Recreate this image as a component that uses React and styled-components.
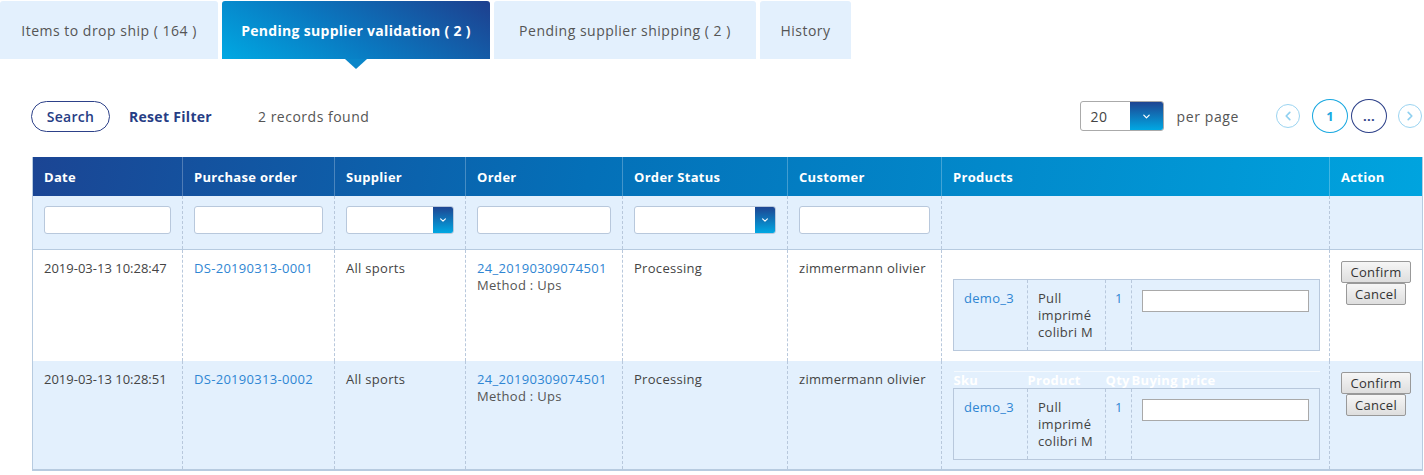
import styled, { createGlobalStyle } from 'styled-components';

const GlobalStyle = createGlobalStyle`
  body {
    margin: 0;
    background: #fff;
    font-family: 'Open Sans', 'Liberation Sans', sans-serif;
    letter-spacing: 0.3px;
    color: #444;
  }
`;

const Page = styled.div`
  width: 1424px;
`;

const Tabs = styled.div`
  display: flex;
  gap: 4px;
  padding-top: 1px;
`;

const Tab = styled.div`
  position: relative;
  height: 58px;
  width: ${({ w }) => w}px;
  display: flex;
  align-items: center;
  justify-content: center;
  border-radius: 3px 3px 0 0;
  font-size: 14px;
  letter-spacing: ${({ active }) => (active ? 0.3 : 0.5)}px;
  font-weight: ${({ active }) => (active ? 700 : 400)};
  color: ${({ active }) => (active ? '#fff' : '#555')};
  background: ${({ active }) => (active ? 'linear-gradient(30deg, #00a9e3 0%, #0a78c0 45%, #1e3f8e 100%)' : '#e3f0fd')};
  box-sizing: border-box;
`;

const Arrow = styled.span`
  position: absolute;
  left: 50%;
  bottom: -10px;
  margin-left: -11px;
  width: 0;
  height: 0;
  border-left: 11px solid transparent;
  border-right: 11px solid transparent;
  border-top: 10px solid #0a86c9;
`;

const Content = styled.div`
  padding: 41px 2px 0 31px;
`;

const Toolbar = styled.div`
  display: flex;
  align-items: center;
  height: 32px;
`;

const SearchButton = styled.button`
  height: 31px;
  width: 79px;
  border: 1.5px solid #2d4189;
  border-radius: 16px;
  background: #fff;
  color: #263d85;
  font-family: inherit;
  letter-spacing: 0.3px;
  font-size: 14px;
  font-weight: 600;
  padding: 0;
`;

const ResetLink = styled.span`
  margin-left: 19px;
  color: #263d85;
  font-size: 14px;
  font-weight: 700;
`;

const Records = styled.span`
  margin-left: 46px;
  color: #555;
  font-size: 14px;
  letter-spacing: 0.5px;
`;

const Spacer = styled.div`
  flex: 1;
`;

const PerPageSelect = styled.div`
  display: flex;
  width: 84px;
  height: 30px;
  border: 1px solid #aaa;
  border-radius: 3px;
  box-sizing: border-box;
  overflow: hidden;
`;

const SelectValue = styled.div`
  flex: 1;
  padding-left: 10px;
  display: flex;
  align-items: center;
  font-size: 14px;
  color: #444;
`;

const SelectCaret = styled.div`
  width: ${({ w }) => w}px;
  display: flex;
  align-items: center;
  justify-content: center;
  background: linear-gradient(to bottom, #1e4592, #00a8e3);
`;

const PerPageLabel = styled.span`
  margin-left: 13px;
  font-size: 14px;
  letter-spacing: 0.6px;
  color: #555;
`;

const Pager = styled.div`
  display: flex;
  align-items: center;
  margin-left: 37px;
`;

const NavCircle = styled.div`
  width: 24px;
  height: 24px;
  border: 1.5px solid #9bd4f1;
  border-radius: 50%;
  box-sizing: border-box;
  display: flex;
  align-items: center;
  justify-content: center;
  margin: ${({ m }) => m};
`;

const PageCircle = styled.div`
  width: 36px;
  height: 34px;
  border: 1.5px solid ${({ current }) => (current ? '#19a8e0' : '#2d4189')};
  color: ${({ current }) => (current ? '#19a8e0' : '#2d4189')};
  border-radius: 50%;
  box-sizing: border-box;
  display: flex;
  align-items: center;
  justify-content: center;
  font-size: 13px;
  font-weight: 700;
  margin-right: ${({ mr }) => mr || 0}px;
`;

const Table = styled.table`
  margin-top: 25px;
  margin-left: 1px;
  width: 1390px;
  border-collapse: collapse;
  table-layout: fixed;
  border-left: 1px solid #b7cbe0;
  border-right: 1px solid #b7cbe0;
  border-bottom: 2px solid #b7cbe0;
  font-size: 13px;
`;

const HeadRow = styled.tr`
  background: linear-gradient(100deg, #1b4594 0%, #0470b8 40%, #00a4df 100%);
`;

const Th = styled.th`
  height: 39px;
  padding: 0 11px;
  text-align: left;
  color: #fff;
  font-size: 13px;
  font-weight: 700;
  border-left: 1px solid rgba(255, 255, 255, 0.25);
  &:first-child { border-left: none; }
`;

const FilterRow = styled.tr`
  background: #e3f0fd;
  border-bottom: 1px solid #b7cbe0;
`;

const Td = styled.td`
  padding: ${({ pad }) => pad || '10px 11px'};
  vertical-align: top;
  border-left: 1px dashed #b8c8dc;
  color: #444;
  line-height: 17px;
  text-align: ${({ center }) => (center ? 'center' : 'left')};
  &:first-child { border-left: none; }
`;

const DateText = styled.span`
  white-space: nowrap;
  letter-spacing: 0;
`;

const FilterInput = styled.div`
  height: 28px;
  margin-bottom: 5px;
  background: #fff;
  border: 1px solid #b8c8dc;
  border-radius: 3px;
  box-sizing: border-box;
  display: flex;
  justify-content: flex-end;
  overflow: hidden;
`;

const Row = styled.tr`
  background: ${({ alt }) => (alt ? '#e3f0fd' : '#fff')};
  height: ${({ h }) => h}px;
`;

const Link = styled.span`
  color: #2f86d3;
`;

const Sub = styled.div`
  color: #555;
`;

const InnerTable = styled.table`
  width: 100%;
  border-collapse: collapse;
  table-layout: fixed;
  font-size: 13px;
`;

const InnerTh = styled.th`
  color: #fff;
  font-weight: 700;
  text-align: left;
  padding: 0;
  height: 16px;
  line-height: 16px;
  border-top: 1px solid rgba(255, 255, 255, 0.6);
  white-space: nowrap;
`;

const InnerRow = styled.tr`
  background: #e3f0fd;
  border: 1px solid #b8c8dc;
`;

const InnerTd = styled.td`
  vertical-align: top;
  padding: 10px ${({ pr }) => pr || 10}px 9px ${({ pl }) => pl || 10}px;
  border-left: 1px dashed #b8c8dc;
  line-height: 17px;
  &:first-child { border-left: none; }
`;

const PriceInput = styled.div`
  height: 22px;
  background: #fff;
  border: 1px solid #a9a9a9;
  box-sizing: border-box;
`;

const ActionButton = styled.button`
  display: block;
  margin: 0 auto;
  height: 22px;
  width: ${({ w }) => w}px;
  padding: 0;
  font-family: inherit;
  letter-spacing: 0.3px;
  font-size: 13px;
  color: #333;
  border: 1px solid #999;
  border-radius: 2px;
  background: linear-gradient(to bottom, #f6f6f6, #dedede);
`;

const Chevron = ({ dir = 'down', color = '#fff', size = 9 }) => {
  const d = {
    down: 'M2 3.5 L5 6.5 L8 3.5',
    left: 'M6.5 2 L3.5 5 L6.5 8',
    right: 'M3.5 2 L6.5 5 L3.5 8',
  }[dir];
  return (
    <svg width={size} height={size} viewBox="0 0 10 10">
      <path d={d} fill="none" stroke={color} strokeWidth="1.4" strokeLinecap="round" strokeLinejoin="round" />
    </svg>
  );
};

const tabs = [
  { label: 'Items to drop ship ( 164 )', w: 218 },
  { label: 'Pending supplier validation ( 2 )', w: 268, active: true },
  { label: 'Pending supplier shipping ( 2 )', w: 262 },
  { label: 'History', w: 91 },
];

const columns = [
  ['Date', 150],
  ['Purchase order', 152],
  ['Supplier', 131],
  ['Order', 157],
  ['Order Status', 165],
  ['Customer', 154],
  ['Products', 388],
  ['Action', 93],
];

const rows = [
  { date: '2019-03-13 10:28:47', po: 'DS-20190313-0001', h: 111, pad: '12px 9px 9px 11px' },
  { date: '2019-03-13 10:28:51', po: 'DS-20190313-0002', h: 109, alt: true, pad: '10px 9px 8px 11px' },
];

const App = () => (
  <Page>
    <GlobalStyle />
    <Tabs>
      {tabs.map((t) => (
        <Tab key={t.label} w={t.w} active={t.active}>
          {t.label}
          {t.active && <Arrow />}
        </Tab>
      ))}
    </Tabs>
    <Content>
      <Toolbar>
        <SearchButton>Search</SearchButton>
        <ResetLink>Reset Filter</ResetLink>
        <Records>2 records found</Records>
        <Spacer />
        <PerPageSelect>
          <SelectValue>20</SelectValue>
          <SelectCaret w={33}>
            <Chevron />
          </SelectCaret>
        </PerPageSelect>
        <PerPageLabel>per page</PerPageLabel>
        <Pager>
          <NavCircle m="0 12px 0 0">
            <Chevron dir="left" color="#8fd0f0" size={12} />
          </NavCircle>
          <PageCircle current mr={3}>1</PageCircle>
          <PageCircle>...</PageCircle>
          <NavCircle m="0 0 0 11px">
            <Chevron dir="right" color="#8fd0f0" size={12} />
          </NavCircle>
        </Pager>
      </Toolbar>
      <Table>
        <colgroup>
          {columns.map(([name, w]) => (
            <col key={name} style={{ width: w }} />
          ))}
        </colgroup>
        <thead>
          <HeadRow>
            {columns.map(([name]) => (
              <Th key={name}>{name}</Th>
            ))}
          </HeadRow>
        </thead>
        <tbody>
          <FilterRow>
            <Td><FilterInput /></Td>
            <Td><FilterInput /></Td>
            <Td>
              <FilterInput>
                <SelectCaret w={20}><Chevron size={8} /></SelectCaret>
              </FilterInput>
            </Td>
            <Td><FilterInput /></Td>
            <Td>
              <FilterInput>
                <SelectCaret w={20}><Chevron size={8} /></SelectCaret>
              </FilterInput>
            </Td>
            <Td><FilterInput /></Td>
            <Td />
            <Td />
          </FilterRow>
          {rows.map((r) => (
            <Row key={r.po} alt={r.alt} h={r.h}>
              <Td><DateText>{r.date}</DateText></Td>
              <Td><Link>{r.po}</Link></Td>
              <Td>All sports</Td>
              <Td>
                <Link>24_20190309074501</Link>
                <Sub>Method : Ups</Sub>
              </Td>
              <Td>Processing</Td>
              <Td>zimmermann olivier</Td>
              <Td pad={r.pad}>
                <InnerTable>
                  <colgroup>
                    <col style={{ width: 74 }} />
                    <col style={{ width: 78 }} />
                    <col style={{ width: 26 }} />
                    <col />
                  </colgroup>
                  <thead>
                    <tr>
                      <InnerTh>Sku</InnerTh>
                      <InnerTh>Product</InnerTh>
                      <InnerTh>Qty</InnerTh>
                      <InnerTh>Buying price</InnerTh>
                    </tr>
                  </thead>
                  <tbody>
                    <InnerRow>
                      <InnerTd><Link>demo_3</Link></InnerTd>
                      <InnerTd>Pull imprimé colibri M</InnerTd>
                      <InnerTd pl={9} pr={4}><Link>1</Link></InnerTd>
                      <InnerTd><PriceInput /></InnerTd>
                    </InnerRow>
                  </tbody>
                </InnerTable>
              </Td>
              <Td center pad="11px 0">
                <ActionButton w={70}>Confirm</ActionButton>
                <ActionButton w={60}>Cancel</ActionButton>
              </Td>
            </Row>
          ))}
        </tbody>
      </Table>
    </Content>
  </Page>
);

export default App;
